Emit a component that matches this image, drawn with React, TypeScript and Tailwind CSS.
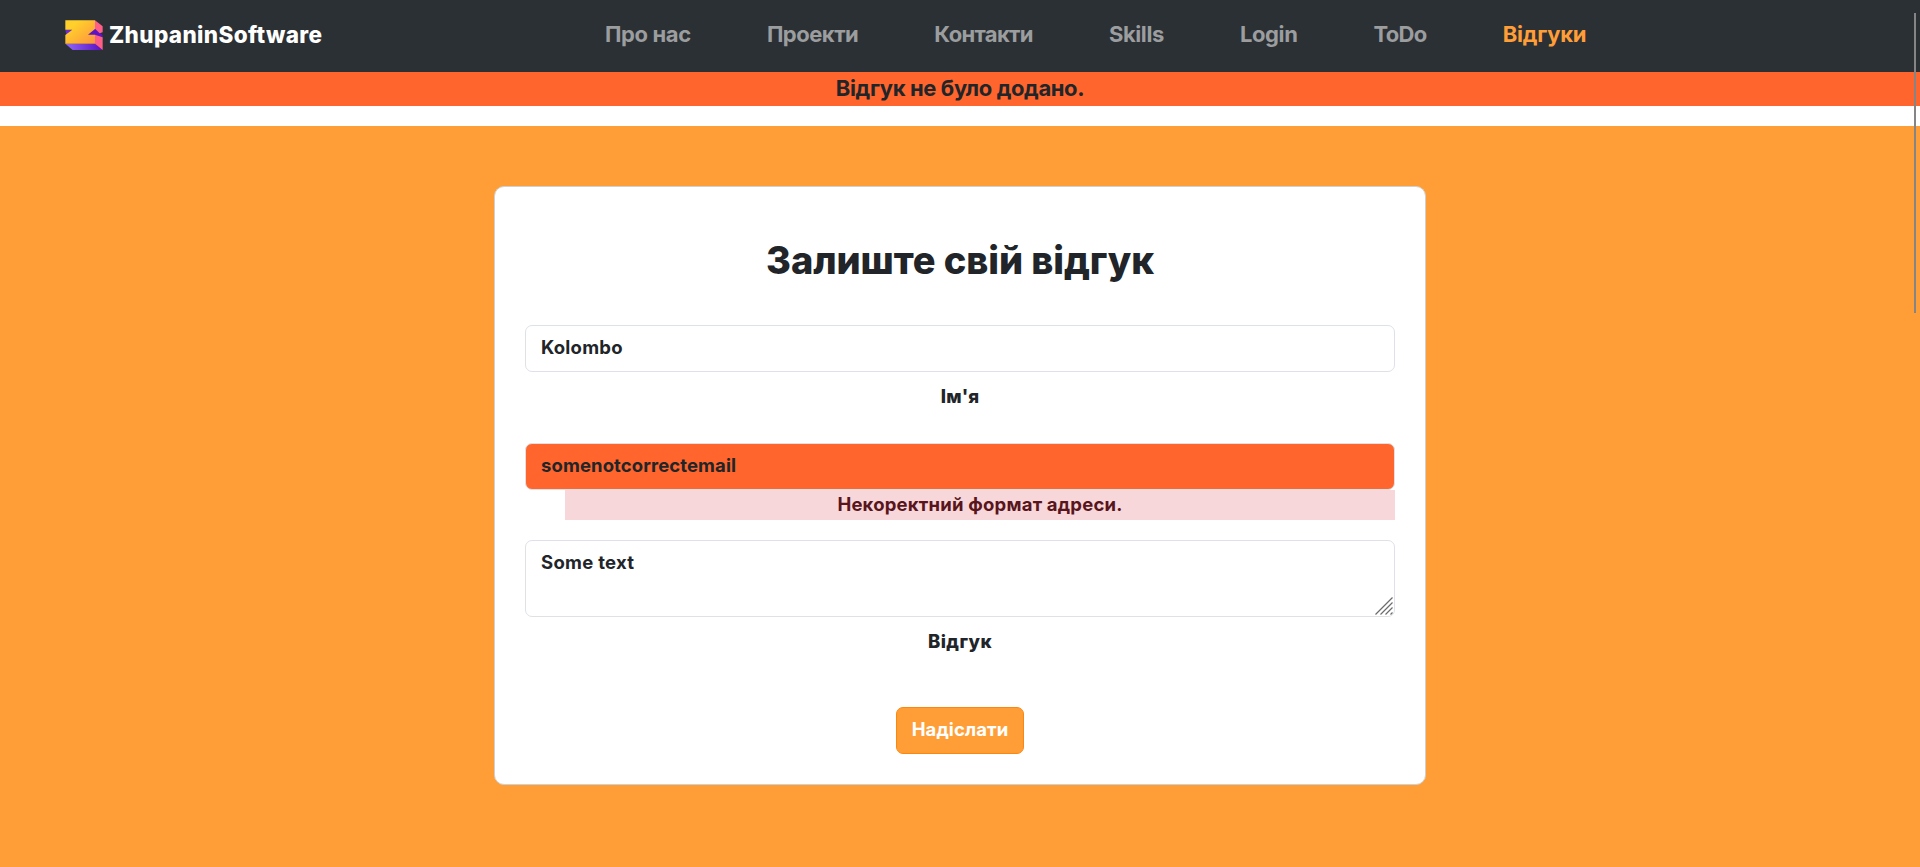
const links = [
  { label: "Про нас", tracking: "tracking-[-0.37px]" },
  { label: "Проекти", tracking: "tracking-[-0.5px]" },
  { label: "Контакти", tracking: "tracking-[-0.65px]" },
  { label: "Skills", tracking: "tracking-[-0.42px]" },
  { label: "Login", tracking: "tracking-[-0.4px]" },
  { label: "ToDo", tracking: "tracking-[-0.7px]" },
  { label: "Відгуки", tracking: "tracking-[-0.25px]", active: true },
];

function Logo() {
  return (
    <svg width="38" height="31" viewBox="46 60 114 93" className="-mt-px block shrink-0">
      <defs>
        <linearGradient id="front" x1="0" y1="0" x2="1" y2="1">
          <stop offset="0.25" stopColor="#ffcf2b" />
          <stop offset="1" stopColor="#ff9340" />
        </linearGradient>
        <linearGradient id="base" x1="0" y1="0" x2="1" y2="0">
          <stop offset="0" stopColor="#9068f5" />
          <stop offset="1" stopColor="#5a0fc0" />
        </linearGradient>
      </defs>
      <path d="M47 131H136L159 150H69Z" fill="url(#base)" />
      <path d="M114 105L136 86L159 105V112L136 105Z" fill="#5c14c4" />
      <path d="M47 89H70L50 104Z" fill="#6a2bd0" />
      <path d="M136 61L159 79V97L150 100L136 86ZM136 104L159 112V150L136 131Z" fill="#ff5f86" />
      <path d="M47 61H136V87L115 104H136V131H47V105L68 89H47Z" fill="url(#front)" />
    </svg>
  );
}

const field =
  "block w-full rounded-[7px] border border-[#dee2e6] px-[15px] text-[18.5px] font-bold text-[#212529] outline-none";

export default function App() {
  return (
    <div className="relative flex h-[867px] w-full flex-col overflow-hidden bg-white font-['Inter',sans-serif] font-bold text-[#212529]">
      <header className="flex h-[72px] shrink-0 items-center bg-[#2b3035] pl-[65px]">
        <a className="flex w-[540px] items-center gap-[6px] text-white">
          <Logo />
          <span className="-mt-[3px] text-[22.5px] font-extrabold leading-[34px] tracking-[0.35px]">ZhupaninSoftware</span>
        </a>
        <nav className="-mt-1 flex gap-[76.1px] text-[22px] leading-[34px]">
          {links.map((l) => (
            <a
              key={l.label}
              className={`whitespace-nowrap ${l.tracking} ${l.active ? "text-[#ff9e37]" : "text-[#9b9d9f]"}`}
            >
              {l.label}
            </a>
          ))}
        </nav>
      </header>

      <div className="h-[34px] shrink-0 bg-[#ff652c] text-center text-[22px] leading-[33px] tracking-[-0.38px]">
        Відгук не було додано.
      </div>

      <main className="mt-5 flex grow justify-center bg-[#ff9e37] pt-[60px]">
        <form className="flex h-[599px] w-[932px] flex-col items-center rounded-[10px] border border-[#cfd0d1] bg-white px-[30px]">
          <h1 className="mt-[48px] text-[38px] font-extrabold leading-[50px] tracking-[-0.08px]">Залиште свій відгук</h1>

          <input className={`${field} mt-[40px] h-[47px] shrink-0 pb-[3px] tracking-[0.22px]`} defaultValue="Kolombo" />
          <label className="mt-[9px] text-[18.5px] font-extrabold leading-[30px] tracking-[0.2px]">Ім'я</label>

          <input
            className={`${field} mt-[32px] h-[47px] shrink-0 bg-[#ff652c] pb-[3px] tracking-[0.1px]`}
            defaultValue="somenotcorrectemail"
          />
          <div className="h-[30px] w-[830px] self-end bg-[#f8d7da] text-center text-[18.5px] leading-[28px] tracking-[0.2px] text-[#58151c]">
            Некоректний формат адреси.
          </div>

          <div className="relative mt-5 w-full">
            <textarea
              className={`${field} h-[77px] resize-none pt-[7px] leading-[28px] tracking-[0.29px]`}
              defaultValue="Some text"
            />
            <svg width="18" height="18" viewBox="0 0 18 18" className="absolute right-[2px] bottom-[2px]">
              <path d="M0.5 17.5L17.5 0.5M5.5 17.5L17.5 5.5M10.5 17.5L17.5 10.5M15.5 17.5L17.5 15.5" stroke="#6b6b6b" strokeWidth="1.2" />
            </svg>
          </div>
          <label className="mt-[9px] text-[18.5px] font-extrabold leading-[30px] tracking-[0.4px]">Відгук</label>

          <button
            type="button"
            className="mt-[51px] h-[47px] w-[128px] shrink-0 rounded-[7px] border border-[#ff860d] bg-[#ff9e37] pb-[1px] text-[18.5px] tracking-[0.1px] text-white"
          >
            Надіслати
          </button>
        </form>
      </main>

      <div className="absolute top-[13px] right-[4px] h-[300px] w-[2px] bg-[#858585]" />
    </div>
  );
}
